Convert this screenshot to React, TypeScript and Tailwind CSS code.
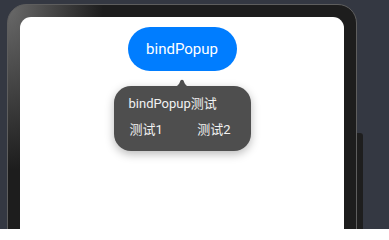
import React from 'react'

const FONT = { fontFamily: 'Roboto, "Noto Sans CJK SC", sans-serif' }

function PopupArrow() {
  return (
    <svg
      width="20"
      height="8"
      viewBox="0 0 20 8"
      className="absolute -top-[7px] left-1/2 -translate-x-1/2"
    >
      <path d="M0 8 C5 8 7 6 8.5 1.5 Q10 0 11.5 1.5 C13 6 15 8 20 8 Z" fill="#4e4e4e" />
    </svg>
  )
}

export default function App() {
  return (
    <div
      className="w-[389px] h-[229px] overflow-hidden bg-[#343842] flex items-start pl-[7px] pt-[4px]"
      style={FONT}
    >
      {/* device frame */}
      <div className="w-[350px] h-[260px] rounded-t-[19px] border border-[#5e5e5e] bg-[radial-gradient(ellipse_95px_165px_at_0_0,#6a6a6a,#1d1d1d)] pt-[12px] px-[12px]">
        <div className="h-full bg-white rounded-t-[11px] flex flex-col items-center">
          <button className="mt-[10px] w-[109px] h-[44px] rounded-full bg-[#007dff] text-white text-[15px] leading-none">
            bindPopup
          </button>

          <div className="relative mt-[15px] w-[137px] h-[65px] rounded-[17px] bg-[#4e4e4e] shadow-[0_3px_10px_rgba(0,0,0,0.28)] pl-[15px] pr-[20px] pt-[9px] text-[#f2f2f2]">
            <PopupArrow />
            <div className="text-[13px] leading-[18px]">bindPopup测试</div>
            <div className="mt-[8px] flex justify-between text-[13px] leading-[18px] pl-[1px]">
              <span>测试1</span>
              <span>测试2</span>
            </div>
          </div>
        </div>
      </div>

      {/* side key */}
      <div className="mt-[129px] w-[6px] h-[120px] rounded-tr-[3px] bg-[#1e1e1e]" />
    </div>
  )
}
